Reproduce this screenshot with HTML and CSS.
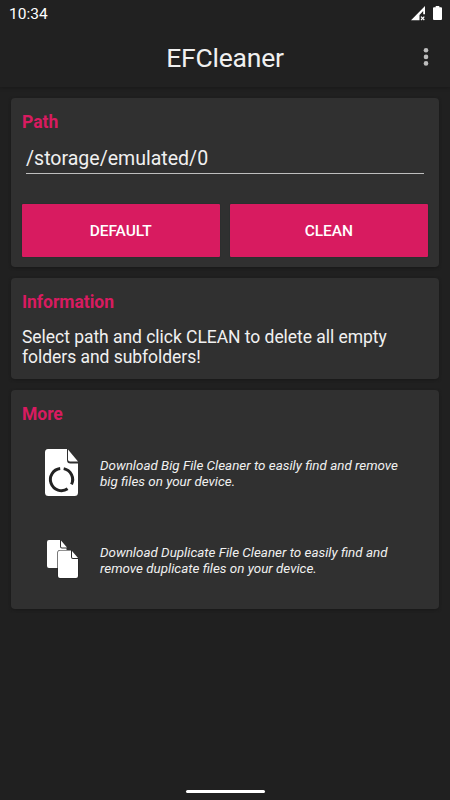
FILE: index.html
```html
<!DOCTYPE html>
<html lang="en">
<head>
<meta charset="utf-8">
<title>EFCleaner</title>
<link rel="stylesheet" href="styles.css">
</head>
<body>
<div class="screen">
  <header class="top">
    <div class="status">
      <span class="time">10:34</span>
      <svg class="signal" width="15" height="15" viewBox="0 0 15 15"><path d="M0 14.2 14 0V8.3H12.2V5L8.500 9V14.2Z" fill="#fff"/><path d="m10 10.6 3.3 3.4M13.3 10.6 10 14" stroke="#fff" stroke-width="1.2"/></svg>
      <svg class="battery" width="9" height="14" viewBox="0 0 9 14"><path d="M2.7 0H6.3V1.3H8Q9 1.3 9 2.3V13Q9 14 8 14H1Q0 14 0 13V2.3Q0 1.3 1 1.3H2.7Z" fill="#fff"/></svg>
    </div>
    <div class="toolbar">
      <h1>EFCleaner</h1>
      <svg class="menu" width="6" height="20" viewBox="0 0 6 20" fill="#bdbdbd"><circle cx="3" cy="3.3" r="2.3"/><circle cx="3" cy="9.9" r="2.3"/><circle cx="3" cy="16.4" r="2.3"/></svg>
    </div>
  </header>
  <main>
    <section class="card path-card">
      <h2>Path</h2>
      <div class="field">/storage/emulated/0</div>
      <div class="buttons"><button>DEFAULT</button><button>CLEAN</button></div>
    </section>
    <section class="card info-card">
      <h2>Information</h2>
      <p>Select path and click CLEAN to delete all empty<br>folders and subfolders!</p>
    </section>
    <section class="card more-card">
      <h2>More</h2>
      <div class="promo">
        <svg width="78" height="60" viewBox="0 0 78 60">
          <path d="M26 6H45V17Q45 20.5 48.500 20.5H56V49.500Q56 53 52.500 53H26.500Q23 53 23 49.500V9.500Q23 6 26 6Z" fill="#fff"/>
          <path d="M46 6.500 56 18.500H48Q46 18.500 46 16.500Z" fill="#fff"/>
          <path d="M38.200 25.500A11.100 11.100 0 1 0 45.600 45.800M41.700 25.600A11.100 11.100 0 0 1 49.500 41.400" fill="none" stroke="#222" stroke-width="3"/>
        </svg>
        <p>Download Big File Cleaner to easily find and remove<br>big files on your device.</p>
      </div>
      <div class="promo">
        <svg width="78" height="60" viewBox="0 0 78 60">
          <path d="M27 10H38V16.500Q38 18.500 40 18.500H44.500V38H27Q25 38 25 36V12Q25 10 27 10ZM39 10.500 45 17.500H40Q39 17.500 39 16.500Z" fill="#fff"/>
          <path d="M38 20.500H49V27Q49 29 51 29H56V46Q56 48 54 48H38Q36 48 36 46V22.500Q36 20.500 38 20.500Z" fill="#fff" stroke="#222" stroke-width="1.200" paint-order="stroke"/>
          <path d="M50 21 56 28H51Q50 28 50 27Z" fill="#fff"/>
        </svg>
        <p>Download Duplicate File Cleaner to easily find and<br>remove duplicate files on your device.</p>
      </div>
    </section>
  </main>
  <div class="home"></div>
</div>
</body>
</html>
```
FILE: styles.css
```css
* { box-sizing: border-box; }
body { margin: 0; background: #202020; color: #f0f0f0; font-family: Roboto, sans-serif; }
h1, h2, p { margin: 0; font-weight: 400; }
svg { display: block; flex: none; }
.screen { width: 450px; height: 800px; display: flex; flex-direction: column; overflow: hidden; }
.top { height: 87px; background: #212121; box-shadow: 0 1px 3px #191919; }
.status { height: 27px; display: flex; align-items: center; padding: 0 8px 0 9px; }
.time { font-size: 15.5px; color: #fff; flex: 1; }
.signal { margin-right: 7px; }
.battery { margin-top: -1px; }
.toolbar { height: 60px; display: grid; grid-template-columns: 1fr auto 1fr; align-items: center; padding: 1px 21px 0; }
h1 { grid-column: 2; font-size: 26.5px; line-height: 32px; letter-spacing: -0.2px; }
.menu { justify-self: end; margin-top: -1px; }
main { padding: 11px 11px 0; display: flex; flex-direction: column; gap: 11px; flex: 1; }
.card { background: #303030; border-radius: 4px; padding: 14px 11px 11px; box-shadow: 0 1px 3px #181818; }
h2 { color: #d81b60; font-size: 17.5px; line-height: 20px; font-weight: 700; letter-spacing: -0.03px; }
.path-card { height: 169.4px; }
.field { height: 32px; margin: 10px 4px 30px; padding-top: 2px; font-size: 19.55px; line-height: 30px; border-bottom: 1px solid #bebebe; }
.buttons { display: grid; grid-template-columns: 1fr 1fr; gap: 10px; margin: 0 0 0 -0.5px; }
button { height: 53px; border: 0; border-radius: 1px; background: #d81b60; color: #fff; font: 500 15.5px Roboto, sans-serif; letter-spacing: -0.05px; box-shadow: 0 0 1px #102020; }
.info-card { height: 100.3px; }
.info-card p { margin-top: 15px; font-size: 17.5px; line-height: 20px; letter-spacing: -0.04px; }
.more-card { height: 219.3px; }
.promo { height: 87px; display: flex; align-items: center; }
.more-card h2 { margin-bottom: 6px; }
.promo p { padding-top: 1px; font-size: 13.4px; line-height: 16px; font-style: italic; }
.home { width: 79px; height: 3px; margin: 0 auto 7px; border-radius: 2px; background: #fff; }
```
